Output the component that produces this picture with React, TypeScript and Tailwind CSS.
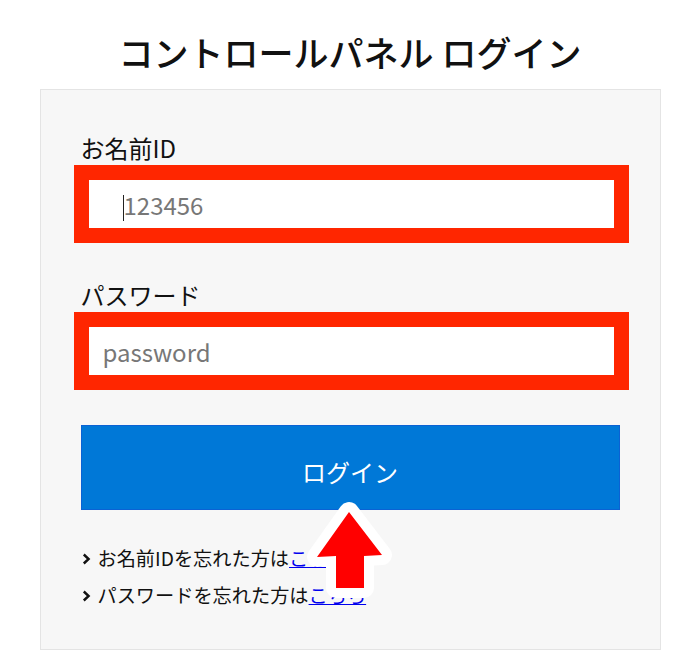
import { useState } from "react";

function UpArrow() {
  return (
    <svg
      className="pointer-events-none absolute left-[250px] top-[400px]"
      width="110"
      height="115"
      viewBox="0 0 110 115"
    >
      <path
        d="M58 22 L91 65 L73 66 L73 98 L45 98 L45 66 L26 67 Z"
        fill="#ff0000"
        stroke="#ffffff"
        strokeWidth="20"
        strokeLinejoin="round"
        paintOrder="stroke"
      />
    </svg>
  );
}

function Chevron() {
  return (
    <svg width="9" height="12" viewBox="0 0 9 12" className="ml-[1px] mr-[7px] shrink-0">
      <path d="M1.8 1.5 L6.6 6 L1.8 10.5" fill="none" stroke="#111" strokeWidth="2.4" />
    </svg>
  );
}

export default function App() {
  const [userId, setUserId] = useState("");
  const [password, setPassword] = useState("");

  return (
    <div className="min-h-[668px] bg-white font-['Noto_Sans_CJK_JP','Noto_Sans',sans-serif] text-[#111]">
      <h1 className="pt-[34px] pb-[1px] text-center text-[35px] font-medium leading-none">
        コントロールパネル ログイン
      </h1>

      <div className="relative mx-auto mt-[19px] w-[621px] border border-[#e4e4e4] bg-[#f7f7f7] px-[40px] pt-[46px] pb-[35px]">
        <label className="mb-[5px] block text-[24px] leading-none">お名前ID</label>
        <div className="relative -ml-[7px] h-[78px] w-[555px] border-[15px] border-[#ff2600] bg-white">
          <input
            value={userId}
            onChange={(e) => setUserId(e.target.value)}
            placeholder="123456"
            className="h-[48px] w-full bg-white pl-[35px] text-[24px] leading-none outline-none placeholder:text-[#777]"
          />
          {/* text cursor */}
          <span className="pointer-events-none absolute left-[34px] top-[15px] h-[26px] w-[1.5px] bg-[#222]" />
        </div>

        <label className="mt-[40px] mb-[5px] block text-[24px] leading-none">パスワード</label>
        <div className="-ml-[7px] h-[78px] w-[555px] border-[15px] border-[#ff2600] bg-white">
          <input
            type="password"
            value={password}
            onChange={(e) => setPassword(e.target.value)}
            placeholder="password"
            className="h-[48px] w-full bg-white pl-[14px] text-[24px] leading-none outline-none placeholder:text-[#777]"
          />
        </div>

        <button className="mt-[35px] flex h-[85px] w-full items-center justify-center border border-[#0b62d4] bg-[#0078d7] pt-[9px] text-[24px] leading-none text-white">
          ログイン
        </button>

        <ul className="mt-[30px] text-[19.2px] leading-[37px]">
          <li className="flex items-center">
            <Chevron />
            <span>
              お名前IDを忘れた方は
              <a href="#" className="text-[#0000ee] underline">
                こちら
              </a>
            </span>
          </li>
          <li className="flex items-center">
            <Chevron />
            <span>
              パスワードを忘れた方は
              <a href="#" className="text-[#0000ee] underline">
                こちら
              </a>
            </span>
          </li>
        </ul>

        <UpArrow />
      </div>
    </div>
  );
}
